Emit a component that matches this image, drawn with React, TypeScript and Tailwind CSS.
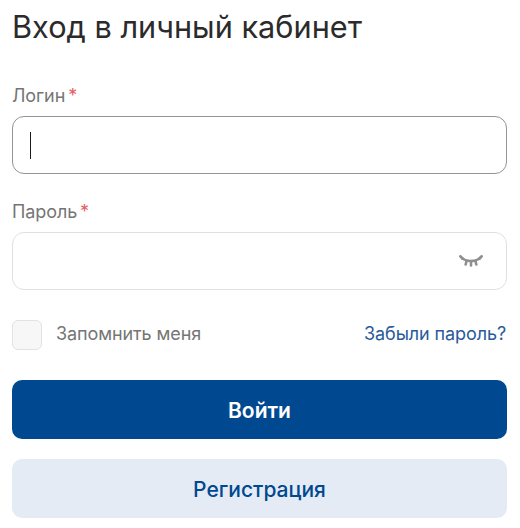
const font = { fontFamily: '"Inter", "Noto Sans", sans-serif' };

const EyeClosed = () => (
  <svg width="24" height="13" viewBox="0 0 24 13" fill="none" stroke="#8f8f8f" strokeWidth="2.600" strokeLinecap="round">
    <path d="M3 3.500c2.800 1.700 5.800 2.500 9 2.500s6.200-.8 9-2.500" />
    <path d="M1.300 1.300 4 3.800M22.700 1.300 20 3.800M7.500 6l-.8 3.500M16.500 6l.8 3.500M12 7v3.500" />
  </svg>
);

const Label = ({ text }: { text: string }) => (
  <label className="block text-[18px] leading-[22px] tracking-[-0.1px] text-[#757575]">
    {text}
    <span className="ml-[3px] text-[#e5605f]">*</span>
  </label>
);

export default function App() {
  return (
    <div className="min-h-screen w-[520px] bg-white px-3 font-normal" style={font}>
      <h1 className="pt-[9px] text-[30.700px] leading-[36px] text-[#2b2b2b]">Вход в личный кабинет</h1>

      <div className="mt-[40px]">
        <Label text="Логин" />
        <div className="mt-[9px] flex h-[58px] w-[495px] items-center rounded-[12px] border border-[#949494] pl-[17px]">
          <div className="h-[27px] w-px bg-[#1a1a1a]" />
        </div>
      </div>

      <div className="mt-[27px]">
        <Label text="Пароль" />
        <div className="mt-[9px] flex h-[58px] w-[495px] items-center justify-end rounded-[12px] border border-[#e0e0e0] pr-[23px]">
          <EyeClosed />
        </div>
      </div>

      <div className="mt-[30px] flex h-[30px] w-[495px] items-center">
        <div className="h-[30px] w-[30px] rounded-[6px] border border-[#e2e2e2] bg-[#f7f7f7]" />
        <span className="mb-[3px] ml-[14px] text-[18px] tracking-[-0.1px] text-[#757575]">Запомнить меня</span>
        <a className="mb-[3px] ml-auto pr-px text-[18px] tracking-[-0.1px] text-[#2a5a9a]">Забыли пароль?</a>
      </div>

      <button className="mt-[30px] block h-[59px] w-[495px] rounded-[10px] bg-[#00488f] pt-[3px] text-[21px] font-semibold text-white">
        Войти
      </button>
      <button className="mt-[20px] block h-[59px] w-[495px] rounded-[10px] bg-[#e4ebf4] pt-[2px] text-[21px] font-medium text-[#00488f]">
        Регистрация
      </button>
    </div>
  );
}
